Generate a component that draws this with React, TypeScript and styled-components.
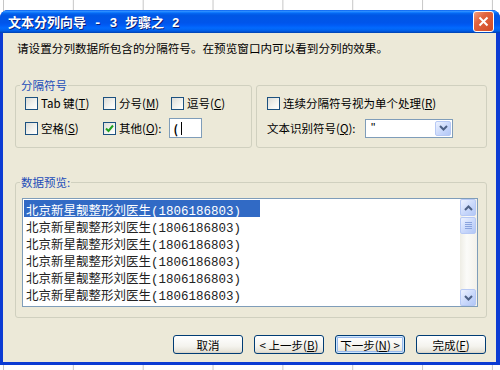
import React from 'react';
import styled, { createGlobalStyle } from 'styled-components';

const GlobalStyle = createGlobalStyle`
  html, body { margin: 0; padding: 0; }
  body {
    width: 500px;
    height: 370px;
    overflow: hidden;
    background-color: #fff;
    background-image: linear-gradient(to right, #c6c6c6 1px, transparent 1px);
    background-size: 69.85px 100%;
    background-position: 3px 0;
    font-family: "Noto Sans CJK SC", "Liberation Sans", sans-serif;
  }
`;

const Page = styled.div`
  width: 500px;
  height: 370px;
  padding-top: 10px;
  box-sizing: border-box;
`;

const Window = styled.div`
  width: 500px;
  height: 355px;
  display: flex;
  flex-direction: column;
  border-radius: 8px 8px 0 0;
  overflow: hidden;
  background: #0b3bd3;
`;

const TitleBar = styled.div`
  height: 23px;
  flex: none;
  display: flex;
  align-items: center;
  padding: 0 6px 0 8px;
  background: linear-gradient(to bottom, #0058ee 0%, #3593ff 5%, #127dff 10%, #0262ee 16%, #0057e5 24%, #0055eb 56%, #005bf5 66%, #026afe 78%, #0062ef 88%, #0050d0 95%, #0040ab 100%);
  color: #fff;
  font: bold 13px "Liberation Mono", "Noto Sans CJK SC", monospace;
  white-space: pre;
  text-shadow: 1px 1px 0 #0a1f7a;
`;

const CloseButton = styled.div`
  margin-left: auto;
  width: 21px;
  height: 21px;
  box-sizing: border-box;
  border: 1px solid #fff;
  border-radius: 3px;
  background: linear-gradient(135deg, #f0a083 0%, #e2643f 35%, #cf4a27 100%);
  display: flex;
  align-items: center;
  justify-content: center;
`;

const Body = styled.div`
  flex: 1;
  display: flex;
  flex-direction: column;
  background: #ece9d8;
  border: solid #0b3bd3;
  border-width: 0 4px 3px 3px;
  padding: 8px 9px 8px 12px;
  font-size: 11.5px;
  color: #000;
`;

const Intro = styled.div`
  margin-left: 2px;
  height: 14px;
  line-height: 14px;
  font-size: 11.6px;
`;

const GroupRow = styled.div`
  margin-top: 30px;
  height: 63px;
  display: grid;
  grid-template-columns: 237px 1fr;
  column-gap: 4px;
`;

const Group = styled.div<{ $pad: string }>`
  position: relative;
  border: 1px solid #d0d0bf;
  border-radius: 3px;
  padding: ${p => p.$pad};
  display: flex;
  flex-direction: column;
  gap: 7px;
`;

const Legend = styled.span`
  position: absolute;
  top: -9px;
  left: 4px;
  padding: 0 1px;
  line-height: 16px;
  background: #ece9d8;
  color: #1d4db8;
`;

const Row = styled.div<{ $h: number }>`
  height: ${p => p.$h}px;
  display: flex;
  align-items: center;
`;

const Cell = styled.div<{ $w?: number }>`
  width: ${p => (p.$w ? `${p.$w}px` : 'auto')};
  display: flex;
  align-items: center;
  gap: 3px;
  white-space: nowrap;
`;

const Box = styled.span`
  width: 13px;
  height: 13px;
  box-sizing: border-box;
  border: 1px solid #1c5180;
  background: linear-gradient(135deg, #dcdcd7 0%, #f4f4f0 60%, #ffffff 100%);
  display: inline-flex;
  align-items: center;
  justify-content: center;
`;

const Key = styled.span`
  text-decoration: underline;
`;

const TextField = styled.div`
  margin-left: 4px;
  width: 33px;
  height: 20px;
  box-sizing: border-box;
  border: 1px solid #7f9db9;
  background: #fff;
  display: flex;
  align-items: center;
  padding-left: 4px;
  font-weight: bold;
  font-size: 12px;
`;

const Caret = styled.span`
  width: 1px;
  height: 13px;
  margin-left: 3px;
  background: #000;
`;

const Select = styled.div`
  width: 88px;
  height: 19px;
  box-sizing: border-box;
  border: 1px solid #7f9db9;
  background: #fff;
  display: flex;
  align-items: center;
  padding: 1px;
`;

const SelectText = styled.span`
  flex: 1;
  padding-left: 4px;
  font: 12px "Liberation Sans", sans-serif;
  line-height: 15px;
  color: #000;
`;

const ArrowButton = styled.span<{ $h?: number }>`
  width: 16px;
  height: ${p => p.$h ?? 15}px;
  box-sizing: border-box;
  border: 1px solid #b7c9f5;
  border-radius: 2px;
  background: linear-gradient(135deg, #eef3ff 0%, #c9d8fb 55%, #b2c7f6 100%);
  display: flex;
  align-items: center;
  justify-content: center;
`;

const Preview = styled(Group)`
  margin-top: 34px;
  height: 136px;
  box-sizing: border-box;
`;

const ListBox = styled.div`
  height: 109px;
  box-sizing: border-box;
  border: 1px solid #7f9db9;
  background: #fff;
  display: flex;
`;

const ListRows = styled.div`
  flex: 1;
  padding: 1px 0 0 1px;
`;

const ListRow = styled.div<{ $selected?: boolean }>`
  width: 236px;
  height: 17px;
  line-height: 17px;
  padding-left: 2px;
  box-sizing: border-box;
  font: 12.5px "Liberation Mono", "Noto Sans CJK SC", monospace;
  white-space: nowrap;
  background: ${p => (p.$selected ? '#316ac5' : 'transparent')};
  color: ${p => (p.$selected ? '#fff' : '#222')};
`;

const ScrollBar = styled.div`
  width: 17px;
  display: flex;
  flex-direction: column;
  background: linear-gradient(to right, #eeede5 0%, #fbfbf9 40%, #f3f1ea 100%);
`;

const Thumb = styled(ArrowButton)`
  margin-top: 1px;
  flex-direction: column;
  gap: 1px;
`;

const Grip = styled.span`
  width: 7px;
  height: 1px;
  background: #8aa3dd;
`;

const Spacer = styled.div`
  flex: 1;
`;

const ButtonBar = styled.div`
  margin-top: auto;
  display: flex;
  justify-content: flex-end;
  gap: 11px;
  padding-right: 1px;
`;

const Button = styled.div<{ $focused?: boolean }>`
  width: 70px;
  height: 19px;
  box-sizing: border-box;
  border: 1px solid #003c74;
  border-radius: 3px;
  background: linear-gradient(to bottom, #ffffff 0%, #f4f3ee 60%, #e6e3d8 90%, #d6d0c5 100%);
  box-shadow: ${p => (p.$focused ? 'inset 0 0 0 1px #cee7ff, inset 0 0 0 2px #98b8ea' : 'none')};
  display: flex;
  align-items: center;
  justify-content: center;
  white-space: pre;
`;

const Check = ({ checked }: { checked?: boolean }) => (
  <Box>
    {checked && (
      <svg width="9" height="9" viewBox="0 0 9 9">
        <polyline points="1,4.5 3.5,7 8,1.5" fill="none" stroke="#21a121" strokeWidth="2" />
      </svg>
    )}
  </Box>
);

const Chevron = ({ up }: { up?: boolean }) => (
  <svg width="9" height="6" viewBox="0 0 9 6">
    <polyline
      points={up ? '1,5 4.5,1.5 8,5' : '1,1 4.5,4.5 8,1'}
      fill="none"
      stroke="#4d6185"
      strokeWidth="2"
    />
  </svg>
);

const rowText = '北京新星靓整形刘医生(1806186803)';

export default function App() {
  return (
    <Page>
      <GlobalStyle />
      <Window>
        <TitleBar>
          文本分列向导 - 3 步骤之 2
          <CloseButton>
            <svg width="11" height="11" viewBox="0 0 11 11">
              <path d="M1.5 1.5 L9.5 9.5 M9.5 1.5 L1.5 9.5" stroke="#fff" strokeWidth="2" />
            </svg>
          </CloseButton>
        </TitleBar>
        <Body>
          <Intro>请设置分列数据所包含的分隔符号。在预览窗口内可以看到分列的效果。</Intro>

          <GroupRow>
            <Group $pad="9px 0 0 9px">
              <Legend>分隔符号</Legend>
              <Row $h={16}>
                <Cell $w={78}>
                  <Check />
                  <span>Tab 键(<Key>T</Key>)</span>
                </Cell>
                <Cell $w={68}>
                  <Check />
                  <span>分号(<Key>M</Key>)</span>
                </Cell>
                <Cell>
                  <Check />
                  <span>逗号(<Key>C</Key>)</span>
                </Cell>
              </Row>
              <Row $h={20}>
                <Cell $w={78}>
                  <Check />
                  <span>空格(<Key>S</Key>)</span>
                </Cell>
                <Cell>
                  <Check checked />
                  <span>其他(<Key>O</Key>):</span>
                  <TextField>
                    (<Caret />
                  </TextField>
                </Cell>
              </Row>
            </Group>

            <Group $pad="9px 0 0 10px">
              <Row $h={16}>
                <Cell>
                  <Check />
                  <span>连续分隔符号视为单个处理(<Key>R</Key>)</span>
                </Cell>
              </Row>
              <Row $h={20}>
                <Cell $w={98}>
                  <span>文本识别符号(<Key>Q</Key>):</span>
                </Cell>
                <Select>
                  <SelectText>"</SelectText>
                  <ArrowButton>
                    <Chevron />
                  </ArrowButton>
                </Select>
              </Row>
            </Group>
          </GroupRow>

          <Preview $pad="15px 8px 0 6px">
            <Legend>数据预览:</Legend>
            <ListBox>
              <ListRows>
                {[0, 1, 2, 3, 4, 5].map(i => (
                  <ListRow key={i} $selected={i === 0}>
                    {rowText}
                  </ListRow>
                ))}
              </ListRows>
              <ScrollBar>
                <ArrowButton $h={17}>
                  <Chevron up />
                </ArrowButton>
                <Thumb $h={17}>
                  <Grip />
                  <Grip />
                  <Grip />
                  <Grip />
                </Thumb>
                <Spacer />
                <ArrowButton $h={17}>
                  <Chevron />
                </ArrowButton>
              </ScrollBar>
            </ListBox>
          </Preview>

          <ButtonBar>
            <Button>取消</Button>
            <Button>{'< 上一步('}<Key>B</Key>)</Button>
            <Button $focused>下一步(<Key>N</Key>){' >'}</Button>
            <Button>完成(<Key>F</Key>)</Button>
          </ButtonBar>
        </Body>
      </Window>
    </Page>
  );
}
